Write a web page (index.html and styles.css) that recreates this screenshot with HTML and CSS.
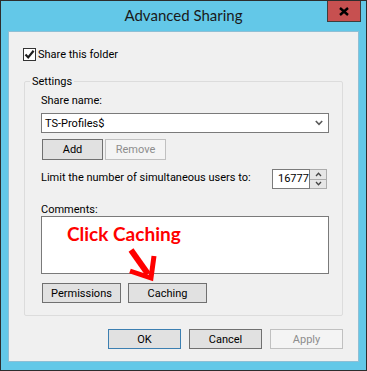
FILE: index.html
```html
<!DOCTYPE html>
<html lang="en">
<head>
    <meta charset="UTF-8">
    <title>Advanced Sharing</title>
    <link rel="stylesheet" href="styles.css">
</head>
<body>
    <div class="window">
        <div class="titlebar">
            <span></span>
            <div class="title">Advanced Sharing</div>
            <button class="close" aria-label="Close">
                <svg width="10" height="9" viewBox="0 0 10 9"><path d="M1 1 L9 8 M9 1 L1 8" stroke="#000" stroke-width="2.4" fill="none"/></svg>
            </button>
        </div>

        <div class="client">
            <label class="check-row">
                <span class="checkbox">
                    <svg width="11" height="11" viewBox="0 0 11 11"><path d="M1.5 5.5 L4.2 8.4 L9.6 1.8" stroke="#1e1e1e" stroke-width="2.2" fill="none"/></svg>
                </span>
                Share this folder
            </label>

            <fieldset class="group">
                <legend>Settings</legend>

                <div class="field-label">Share name:</div>
                <div class="combo">
                    <span>TS-Profiles$</span>
                    <svg width="8" height="6" viewBox="0 0 8 6"><path d="M0.8 1 L4 4.4 L7.2 1" stroke="#5a5a5a" stroke-width="1.6" fill="none"/></svg>
                </div>

                <div class="btn-row">
                    <button class="btn">Add</button>
                    <button class="btn disabled">Remove</button>
                </div>

                <div class="limit-row">
                    <span class="limit-label">Limit the number of simultaneous users to:</span>
                    <div class="spinner">
                        <div class="spin-value">16777</div>
                        <div class="spin-btns">
                            <div class="spin-btn">
                                <svg width="7" height="5" viewBox="0 0 7 5"><path d="M1 4 L3.5 1.3 L6 4" stroke="#444" stroke-width="1.3" fill="none"/></svg>
                            </div>
                            <div class="spin-btn">
                                <svg width="7" height="5" viewBox="0 0 7 5"><path d="M1 1 L3.5 3.7 L6 1" stroke="#444" stroke-width="1.3" fill="none"/></svg>
                            </div>
                        </div>
                    </div>
                </div>

                <div class="field-label comments-label">Comments:</div>
                <div class="comments-wrap">
                    <div class="comments"></div>
                    <!-- red callout drawn over the screenshot -->
                    <div class="callout">Click Caching</div>
                    <svg class="callout-arrow" width="45" height="38" viewBox="120 244 45 38">
                        <path d="M131 249 L148 273" stroke="#f00" stroke-width="6" fill="none"/>
                        <path d="M130 270 L151 277 L154 255" stroke="#f00" stroke-width="5" fill="none" stroke-linejoin="miter"/>
                    </svg>
                </div>

                <div class="btn-row wide">
                    <button class="btn">Permissions</button>
                    <button class="btn">Caching</button>
                </div>
            </fieldset>

            <div class="footer">
                <button class="btn dialog default">OK</button>
                <button class="btn dialog">Cancel</button>
                <button class="btn dialog disabled">Apply</button>
            </div>
        </div>
    </div>
</body>
</html>
```

FILE: styles.css
```css
body {
    margin: 0;
    font-family: Roboto, "Liberation Sans", sans-serif;
    font-size: 11px;
    color: #000;
}
.window {
    width: 367px;
    height: 371px;
    box-sizing: border-box;
    border: 1px solid #2d2d2d;
    background: #63c8e8;
    display: flex;
    flex-direction: column;
}
.titlebar {
    height: 30px;
    display: grid;
    grid-template-columns: 39px 1fr 39px;
    align-items: start;
    flex-shrink: 0;
}
.title {
    text-align: center;
    font-family: Lato, sans-serif;
    font-size: 15px;
    line-height: 28px;
    color: #1a1a1a;
}
.close {
    width: 34px;
    height: 21px;
    padding: 0;
    border: 1px solid #3d3d3d;
    border-top: 0;
    background: #c75050;
    display: flex;
    align-items: center;
    justify-content: center;
}
.client {
    flex: 1;
    margin: 0 7px 8px;
    padding: 0 15px;
    background: #f0f0f0;
    border: 1px solid #8ebfd5;
}
.check-row {
    display: flex;
    align-items: center;
    gap: 2px;
    height: 13px;
    margin: 16px 0 0 -1px;
}
.checkbox {
    width: 13px;
    height: 13px;
    box-sizing: border-box;
    border: 1px solid #333;
    background: #fff;
    display: flex;
    align-items: center;
    justify-content: center;
}
.group {
    margin: 13px 0 0;
    padding: 0 13px 12px 16px;
    border: 1px solid #dcdcdc;
    border-radius: 2px;
    min-width: 0;
}
.group legend {
    margin-left: -11px;
    padding: 0 2px;
    line-height: 15px;
}
.field-label {
    line-height: 15px;
    margin: 4px 0 5px;
}
.combo {
    height: 20px;
    box-sizing: border-box;
    border: 1px solid #7a7a7a;
    background: #fff;
    display: flex;
    align-items: center;
    justify-content: space-between;
    padding: 0 5px 0 3px;
}
.btn-row {
    display: flex;
    gap: 2px;
    margin-top: 6px;
    padding-left: 1px;
}
.btn {
    font: inherit;
    color: #000;
    height: 21px;
    width: 61px;
    padding: 0;
    background: #e1e1e1;
    border: 1px solid #707070;
}
.btn.disabled {
    background: #f4f4f4;
    border-color: #c0c0c0;
    color: #8d8d8d;
}
.btn-row.wide {
    gap: 7px;
    margin-top: 9px;
}
.btn-row.wide .btn {
    width: 79px;
    height: 20px;
}
.limit-row {
    display: flex;
    justify-content: space-between;
    align-items: flex-start;
    margin-top: 9px;
    padding-right: 2px;
}
.limit-label {
    line-height: 15px;
    margin-top: 1px;
    white-space: nowrap;
}
.spinner {
    display: flex;
    height: 20px;
}
.spin-value {
    width: 38px;
    box-sizing: border-box;
    border: 1px solid #7a7a7a;
    background: #fff;
    padding-left: 5px;
    line-height: 18px;
    overflow: hidden;
    white-space: nowrap;
}
.spin-btns {
    width: 17px;
    display: flex;
    flex-direction: column;
}
.spin-btn {
    flex: 1;
    box-sizing: border-box;
    border: 1px solid #acacac;
    border-left: 0;
    background: #e6e6e6;
    display: flex;
    align-items: center;
    justify-content: center;
}
.spin-btn + .spin-btn {
    border-top: 0;
}
.comments-label {
    line-height: 13px;
    margin: 14px 0 0;
}
.comments-wrap {
    position: relative;
}
.comments {
    height: 58px;
    box-sizing: border-box;
    border: 1px solid #7a7a7a;
    background: #fff;
}
.callout {
    position: absolute;
    left: 26px;
    top: 7px;
    font-family: Lato, sans-serif;
    font-weight: bold;
    font-size: 19px;
    line-height: 22px;
    color: #f00;
    white-space: nowrap;
}
.callout-arrow {
    position: absolute;
    left: 79px;
    top: 29px;
}
.footer {
    display: flex;
    justify-content: flex-end;
    gap: 8px;
    margin-top: 13px;
}
.btn.dialog {
    width: 73px;
    height: 20px;
}
.btn.default {
    border-color: #3c7fb1;
}
```
